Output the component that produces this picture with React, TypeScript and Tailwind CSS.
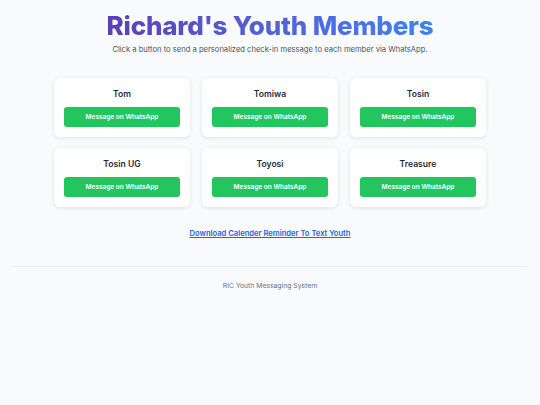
const members = ["Tom", "Tomiwa", "Tosin", "Tosin UG", "Toyosi", "Treasure"];

function MemberCard({ name }: { name: string }) {
  return (
    <div className="flex flex-col items-center rounded-md bg-white p-[10px] shadow-[0_1px_4px_rgba(15,23,42,0.10)]">
      <div className="text-[8.6px] font-semibold leading-[12px] text-slate-800">{name}</div>
      <button className="mt-[7px] h-[20px] w-full rounded-[3px] bg-[#22c55e] text-[6.5px] font-semibold leading-[20px] text-white">
        Message on WhatsApp
      </button>
    </div>
  );
}

export default function App() {
  return (
    <div
      className="min-h-[405px] w-full bg-[#f8fafc] pt-[10px]"
      style={{ fontFamily: "Inter, 'Noto Sans', sans-serif" }}
    >
      <h1 className="mx-auto w-fit bg-gradient-to-r from-[#5a3fb6] to-[#3b82f6] bg-clip-text text-center text-[26px] font-extrabold leading-[32px] tracking-[-0.2px] text-transparent">
        Richard&apos;s Youth Members
      </h1>
      <p className="mt-[2px] text-center text-[7.6px] leading-[12px] text-gray-600">
        Click a button to send a personalized check-in message to each member via WhatsApp.
      </p>

      <div className="mx-auto mt-[22px] grid w-[432px] grid-cols-3 gap-x-[12px] gap-y-[11px]">
        {members.map((m) => (
          <MemberCard key={m} name={m} />
        ))}
      </div>

      <div className="mt-[21px] text-center text-[7.6px] leading-[12px]">
        <a href="#" className="font-semibold text-[#2563eb] underline">
          Download Calender Reminder To Text Youth
        </a>
      </div>

      <div className="mx-[13px] mt-[26px] border-t border-slate-200/70" />
      <p className="mt-[13px] text-center text-[6.8px] leading-[12px] text-gray-500">
        RIC Youth Messaging System
      </p>
    </div>
  );
}
